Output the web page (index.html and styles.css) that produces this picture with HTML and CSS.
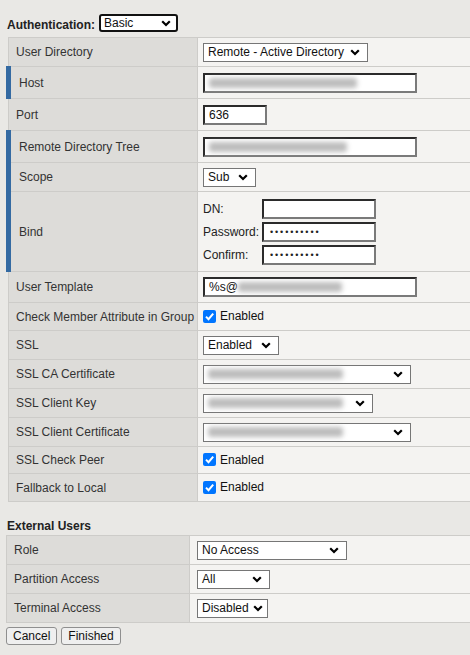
FILE: index.html
```html
<!DOCTYPE html>
<html>
<head>
<meta charset="utf-8">
<link rel="stylesheet" href="styles.css">
</head>
<body>
<div class="page">
  <div class="auth">
    <span class="auth-label">Authentication:</span>
    <span class="sel sel-focus w-basic"><span>Basic</span><svg class="chev" viewBox="0 0 10 7" width="10" height="7"><path d="M1.2 1.2 L5 5 L8.8 1.2" fill="none" stroke="#000" stroke-width="2.2"/></svg></span>
  </div>

  <table class="grid t1">
    <tr class="h29"><td class="lbl">User Directory</td><td class="val"><span class="sel w-ud"><span>Remote - Active Directory</span><svg class="chev" viewBox="0 0 10 7" width="10" height="7"><path d="M1.2 1.2 L5 5 L8.8 1.2" fill="none" stroke="#000" stroke-width="2.2"/></svg></span></td></tr>
    <tr class="h32"><td class="lbl req">Host</td><td class="val"><span class="inp w-long"><span class="blur b150"></span></span></td></tr>
    <tr class="h32"><td class="lbl">Port</td><td class="val"><span class="inp w-port">636</span></td></tr>
    <tr class="h32"><td class="lbl req">Remote Directory Tree</td><td class="val"><span class="inp w-long"><span class="blur b140"></span></span></td></tr>
    <tr class="h29"><td class="lbl req">Scope</td><td class="val"><span class="sel w-scope"><span>Sub</span><svg class="chev" viewBox="0 0 10 7" width="10" height="7"><path d="M1.2 1.2 L5 5 L8.8 1.2" fill="none" stroke="#000" stroke-width="2.2"/></svg></span></td></tr>
    <tr class="h80"><td class="lbl req">Bind</td><td class="val">
      <div class="bind">
        <span>DN:</span><span class="inp w-bind"></span>
        <span>Password:</span><span class="inp w-bind dots">••••••••••</span>
        <span>Confirm:</span><span class="inp w-bind dots">••••••••••</span>
      </div>
    </td></tr>
    <tr class="h31"><td class="lbl">User Template</td><td class="val"><span class="inp w-long">%s@<span class="blur b106"></span></span></td></tr>
    <tr class="h28"><td class="lbl">Check Member Attribute in Group</td><td class="val"><span class="chk"><span class="box"><svg viewBox="0 0 13 13" width="13" height="13"><path d="M3 6.6 L5.5 9.2 L10.2 3.6" fill="none" stroke="#fff" stroke-width="2"/></svg></span>Enabled</span></td></tr>
    <tr class="h29"><td class="lbl">SSL</td><td class="val"><span class="sel w-ssl"><span>Enabled</span><svg class="chev" viewBox="0 0 10 7" width="10" height="7"><path d="M1.2 1.2 L5 5 L8.8 1.2" fill="none" stroke="#000" stroke-width="2.2"/></svg></span></td></tr>
    <tr class="h29"><td class="lbl">SSL CA Certificate</td><td class="val"><span class="sel w-cert"><span class="blur b138"></span><svg class="chev" viewBox="0 0 10 7" width="10" height="7"><path d="M1.2 1.2 L5 5 L8.8 1.2" fill="none" stroke="#000" stroke-width="2.2"/></svg></span></td></tr>
    <tr class="h29"><td class="lbl">SSL Client Key</td><td class="val"><span class="sel w-key"><span class="blur b138"></span><svg class="chev" viewBox="0 0 10 7" width="10" height="7"><path d="M1.2 1.2 L5 5 L8.8 1.2" fill="none" stroke="#000" stroke-width="2.2"/></svg></span></td></tr>
    <tr class="h29"><td class="lbl">SSL Client Certificate</td><td class="val"><span class="sel w-cert"><span class="blur b138"></span><svg class="chev" viewBox="0 0 10 7" width="10" height="7"><path d="M1.2 1.2 L5 5 L8.8 1.2" fill="none" stroke="#000" stroke-width="2.2"/></svg></span></td></tr>
    <tr class="h27"><td class="lbl">SSL Check Peer</td><td class="val"><span class="chk"><span class="box"><svg viewBox="0 0 13 13" width="13" height="13"><path d="M3 6.6 L5.5 9.2 L10.2 3.6" fill="none" stroke="#fff" stroke-width="2"/></svg></span>Enabled</span></td></tr>
    <tr class="h28"><td class="lbl">Fallback to Local</td><td class="val"><span class="chk"><span class="box"><svg viewBox="0 0 13 13" width="13" height="13"><path d="M3 6.6 L5.5 9.2 L10.2 3.6" fill="none" stroke="#fff" stroke-width="2"/></svg></span>Enabled</span></td></tr>
  </table>

  <div class="section">External Users</div>

  <table class="grid t2">
    <tr class="h29"><td class="lbl">Role</td><td class="val"><span class="sel w-role"><span>No Access</span><svg class="chev" viewBox="0 0 10 7" width="10" height="7"><path d="M1.2 1.2 L5 5 L8.8 1.2" fill="none" stroke="#000" stroke-width="2.2"/></svg></span></td></tr>
    <tr class="h29"><td class="lbl">Partition Access</td><td class="val"><span class="sel w-part"><span>All</span><svg class="chev" viewBox="0 0 10 7" width="10" height="7"><path d="M1.2 1.2 L5 5 L8.8 1.2" fill="none" stroke="#000" stroke-width="2.2"/></svg></span></td></tr>
    <tr class="h29"><td class="lbl">Terminal Access</td><td class="val"><span class="sel w-term"><span>Disabled</span><svg class="chev" viewBox="0 0 10 7" width="10" height="7"><path d="M1.2 1.2 L5 5 L8.8 1.2" fill="none" stroke="#000" stroke-width="2.2"/></svg></span></td></tr>
  </table>

  <div class="buttons">
    <button class="btn">Cancel</button>
    <button class="btn">Finished</button>
  </div>
</div>
</body>
</html>
```

FILE: styles.css
```css
html, body {
  margin: 0;
  padding: 0;
  background: #e9e8e5;
  overflow: hidden;
}
.page {
  font-family: "Liberation Sans", Arial, sans-serif;
  font-size: 12px;
  color: #222;
  padding: 14px 0 0 6px;
}
.auth {
  display: flex;
  align-items: flex-end;
  gap: 4px;
  height: 18px;
  margin-left: 1px;
}
.auth-label {
  font-weight: bold;
  font-size: 12px;
  line-height: 13px;
  color: #222;
}
.grid {
  border-collapse: collapse;
  border: 1px solid #a9a8a5;
  margin-top: 5px;
}
.t1 { width: 468px; }
.t2 { width: 468px; }
.grid td {
  border: 1px solid #cdccc9;
  padding: 0;
  vertical-align: middle;
}
.lbl {
  background: #dddcd9;
  color: #333;
  padding-left: 7px !important;
  white-space: nowrap;
}
.t1 .lbl { width: 178px; }
.t2 .lbl { width: 175px; }
.lbl.req {
  border-left: 5px solid #346aa2 !important;
  padding-left: 8px !important;
}
.val {
  background: #f4f3f1;
  padding-left: 5px !important;
}
.t2 .val { padding-left: 7px !important; }
.h27 td { height: 26px; }
.h28 td { height: 27px; }
.h29 td { height: 28px; }
.h31 td { height: 30px; }
.h32 td { height: 31px; }
.h80 td { height: 79px; }

.sel {
  box-sizing: border-box;
  display: inline-flex;
  align-items: center;
  justify-content: space-between;
  height: 19px;
  border: 1px solid #767676;
  background: #fff;
  padding: 0 7px 0 4px;
  color: #111;
  font-size: 12px;
  vertical-align: middle;
}
.sel-focus {
  border: 2px solid #111;
  border-radius: 3px;
  height: 18px;
  padding: 0 5px 0 3px;
}
.chev { flex: none; }
.w-basic { width: 79px; }
.w-ud { width: 165px; }
.w-scope { width: 53px; }
.w-ssl { width: 76px; }
.w-cert { width: 208px; }
.w-key { width: 170px; }
.w-role { width: 150px; }
.w-part { width: 73px; }
.w-term { width: 71px; padding-right: 4px; }

.inp {
  box-sizing: border-box;
  display: inline-flex;
  align-items: center;
  height: 20px;
  background: #fff;
  border-style: solid;
  border-width: 2px;
  border-color: #2b2b2b #7a7a7a #7a7a7a #2b2b2b;
  padding-left: 4px;
  color: #111;
  font-size: 12px;
  vertical-align: middle;
}
.w-long { width: 214px; }
.w-port { width: 64px; }
.w-bind { width: 114px; }
.dots {
  font-size: 9px;
  letter-spacing: 1.9px;
  padding-left: 6px;
  color: #222;
}

.blur {
  display: inline-block;
  height: 10px;
  background: #bdbdbd;
  filter: blur(2.5px);
  border-radius: 3px;
}
.b150 { width: 148px; }
.b140 { width: 138px; }
.b138 { width: 135px; }
.b106 { width: 104px; }

.bind {
  display: grid;
  grid-template-columns: 59px 114px;
  row-gap: 3px;
  align-items: center;
}
.bind .inp { height: 20px; }

.chk {
  display: inline-flex;
  align-items: center;
  gap: 4px;
  font-size: 12px;
  color: #111;
  margin-top: 2px;
}
.box {
  width: 13px;
  height: 13px;
  border-radius: 2px;
  background: #0075ff;
  display: inline-flex;
}

.section {
  font-weight: bold;
  color: #222;
  margin-top: 17px;
  margin-left: 1px;
  line-height: 14px;
}
.t2 { margin-top: 2px; }

.buttons {
  display: flex;
  gap: 4px;
  margin-top: 4px;
}
.btn {
  font-family: "Liberation Sans", Arial, sans-serif;
  font-size: 12px;
  color: #111;
  height: 18px;
  padding: 0 6px;
  background: #efefef;
  border: 1px solid #8f8f8f;
  border-radius: 3px;
  line-height: 14px;
}
```
